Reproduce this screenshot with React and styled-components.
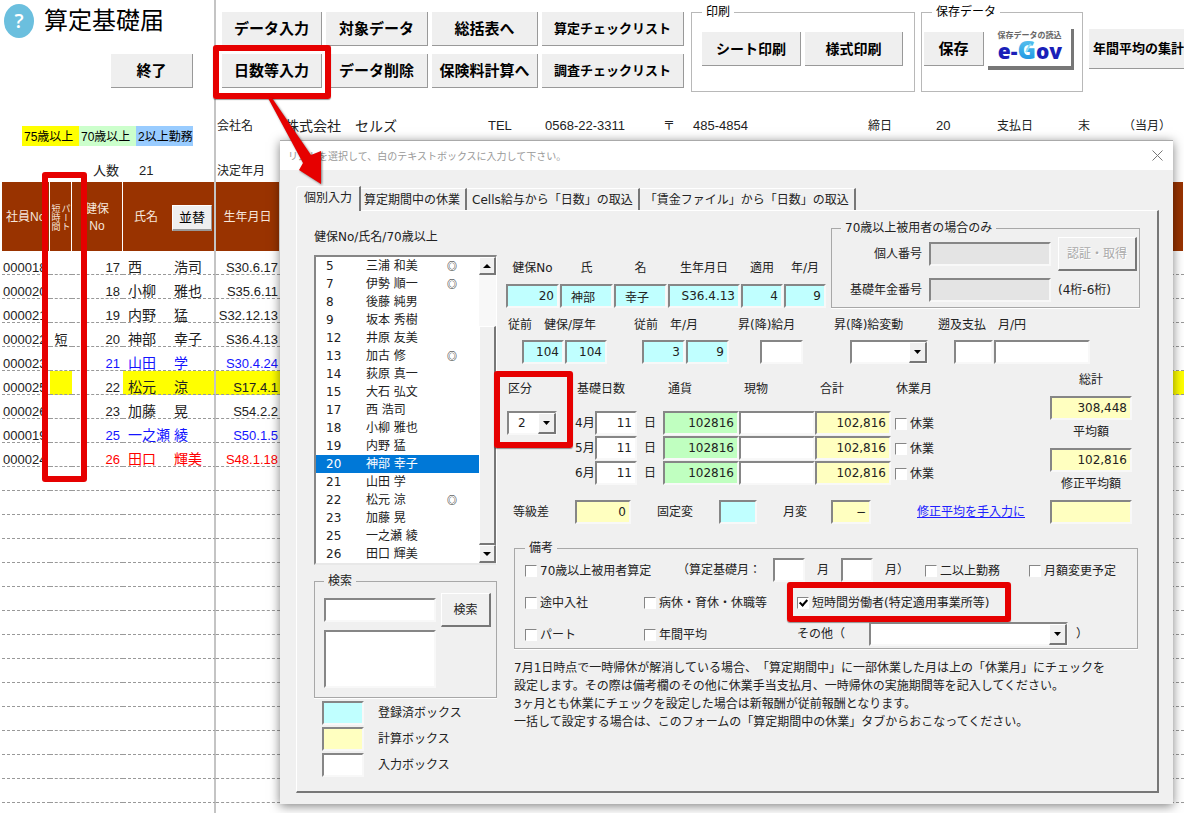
import styled, { createGlobalStyle, css } from "styled-components";

const employees = [
  { code: "000018", no: 17, family: "西", given: "浩司", birth: "S30.6.17" },
  { code: "000020", no: 18, family: "小柳", given: "雅也", birth: "S35.6.11" },
  { code: "000021", no: 19, family: "内野", given: "猛", birth: "S32.12.13" },
  { code: "000022", part: "短", no: 20, family: "神部", given: "幸子", birth: "S36.4.13" },
  { code: "000023", no: 21, family: "山田", given: "学", birth: "S30.4.24", ink: "#1414ff" },
  { code: "000025", no: 22, family: "松元", given: "涼", birth: "S17.4.1", fill: "#ffff00" },
  { code: "000026", no: 23, family: "加藤", given: "晃", birth: "S54.2.2" },
  { code: "000019", no: 25, family: "一之瀬", given: "綾", birth: "S50.1.5", ink: "#1414ff" },
  { code: "000024", no: 26, family: "田口", given: "輝美", birth: "S48.1.18", ink: "#ff0000" },
];

const people = [
  [5, "三浦 和美", true],
  [7, "伊勢 順一", true],
  [8, "後藤 純男"],
  [9, "坂本 秀樹"],
  [12, "井原 友美"],
  [13, "加古 修", true],
  [14, "荻原 真一"],
  [15, "大石 弘文"],
  [17, "西 浩司"],
  [18, "小柳 雅也"],
  [19, "内野 猛"],
  [20, "神部 幸子"],
  [21, "山田 学"],
  [22, "松元 涼", true],
  [23, "加藤 晃"],
  [25, "一之瀬 綾"],
  [26, "田口 輝美"],
];

const blankRows = Array.from({ length: 16 }, (_, i) => i);

const Arrow = () => (
  <ArrowSvg width="60" height="92" viewBox="0 0 60 92" aria-hidden="true">
    <polygon points="3,0 7,0 46,57 56,53 56,86 34,72 38,65" fill="#e60000" />
  </ArrowSvg>
);

const Combo = ({ label, value = "", width }) => (
  <ComboBox $w={width}>
    <select aria-label={label} defaultValue={value}>
      <option value={value}>{value}</option>
    </select>
    <span>
      <svg width="7" height="4" viewBox="0 0 7 4">
        <polygon points="0,0 7,0 3.5,4" fill="#000" />
      </svg>
    </span>
  </ComboBox>
);

const Check = ({ children, ...rest }) => (
  <CheckLabel>
    <input type="checkbox" {...rest} />
    {children}
  </CheckLabel>
);

const SheetTop = () => (
  <Top>
    <TitlePane>
      <Title>
        <Help href="#help">?</Help>
        <h1>算定基礎届</h1>
      </Title>
      <Finish>終了</Finish>
      <Tags>
        <Tag $bg="#ffff00">75歳以上</Tag>
        <Tag $bg="#ccffcc">70歳以上</Tag>
        <Tag $bg="#99ccff">2以上勤務</Tag>
      </Tags>
      <Count>
        <span>人数</span>
        <span>21</span>
      </Count>
    </TitlePane>
    <ToolPane>
      <Tools>
        <ToolGrid>
          <SheetButton>データ入力</SheetButton>
          <SheetButton>対象データ</SheetButton>
          <SheetButton>総括表へ</SheetButton>
          <SheetButton $size={13}>算定チェックリスト</SheetButton>
          <Marked $out="9px 9px 11px 9px">
            <SheetButton>日数等入力</SheetButton>
            <Arrow />
          </Marked>
          <SheetButton>データ削除</SheetButton>
          <SheetButton>保険料計算へ</SheetButton>
          <SheetButton $size={13}>調査チェックリスト</SheetButton>
        </ToolGrid>
        <SheetGroup $w={224} $pad={10}>
          <legend>印刷</legend>
          <div>
            <SheetButton $w={99} $size={14}>シート印刷</SheetButton>
            <SheetButton $w={98} $size={14}>様式印刷</SheetButton>
          </div>
        </SheetGroup>
        <SheetGroup $w={162} $pad={2}>
          <legend>保存データ</legend>
          <div>
            <SheetButton $w={60}>保存</SheetButton>
            <GovButton>
              <small>保存データの読込</small>
              <svg width="72" height="28" viewBox="0 0 72 28">
                <defs>
                  <linearGradient id="g" x1="0" y1="0" x2="0" y2="1">
                    <stop offset="0" stopColor="#6fd0f2" />
                    <stop offset="1" stopColor="#0c8be0" />
                  </linearGradient>
                </defs>
                <text x="36" y="19" fontSize="21" textAnchor="middle">
                  e-
                  <tspan fontSize="25" fill="url(#g)">G</tspan>
                  ov
                </text>
                <path d="M34 9l1-3 2-2M32 12l2-3" fill="none" stroke="#8adcf5" strokeWidth="2" />
              </svg>
            </GovButton>
          </div>
        </SheetGroup>
        <Yearly $w={112} $size={13}>年間平均の集計</Yearly>
      </Tools>
      <Info>
        <span>会社名</span>
        <Company>株式会社　セルズ</Company>
        <b>TEL</b>
        <b>0568-22-3311</b>
        <span>〒</span>
        <b>485-4854</b>
        <span>締日</span>
        <b>20</b>
        <span>支払日</span>
        <span>末</span>
        <span>（当月）</span>
      </Info>
      <Decision>決定年月</Decision>
    </ToolPane>
  </Top>
);

const SheetTable = () => (
  <Table>
    <colgroup>
      <col style={{ width: 48 }} />
      <col style={{ width: 22 }} />
      <col style={{ width: 51 }} />
      <col style={{ width: 93 }} />
      <col style={{ width: 64 }} />
      <col />
    </colgroup>
    <thead>
      <tr>
        <th>社員No</th>
        <PartHead>
          <span>
            パート
            <br />
            短時間
          </span>
        </PartHead>
        <th>
          健保
          <br />
          No
        </th>
        <th>
          <NameHead>
            氏名 <SortButton>並替</SortButton>
          </NameHead>
        </th>
        <th>生年月日</th>
        <th />
      </tr>
    </thead>
    <tbody>
      {employees.map((e) => (
        <Row key={e.code} $ink={e.ink} $fill={e.fill}>
          <td>{e.code}</td>
          <td>{e.part}</td>
          <td>{e.no}</td>
          <td>
            <Name>
              <span>{e.family}</span>
              <span>{e.given}</span>
            </Name>
          </td>
          <td>{e.birth}</td>
          <td />
        </Row>
      ))}
      {blankRows.map((i) => (
        <Row key={i}>
          <td />
          <td />
          <td />
          <td />
          <td />
          <td />
        </Row>
      ))}
    </tbody>
  </Table>
);

const PersonPanel = () => (
  <Side>
    <ListLabel id="people-label">健保No/氏名/70歳以上</ListLabel>
    <ListBox>
      <ul role="listbox" aria-labelledby="people-label">
        {people.map(([no, name, over70]) => (
          <Person key={no} role="option" aria-selected={no === 20}>
            <span>{no}</span>
            <span>{name}</span>
            <span>{over70 && "◎"}</span>
          </Person>
        ))}
      </ul>
      <Scroll>
        <button aria-label="上へ">
          <svg width="8" height="4" viewBox="0 0 8 4">
            <polygon points="0,4 8,4 4,0" />
          </svg>
        </button>
        <Thumb />
        <button aria-label="下へ">
          <svg width="8" height="4" viewBox="0 0 8 4">
            <polygon points="0,0 8,0 4,4" />
          </svg>
        </button>
      </Scroll>
    </ListBox>
    <SearchGroup>
      <legend>検索</legend>
      <div>
        <Field aria-label="検索" $w={112} />
        <FormButton $w={50}>検索</FormButton>
      </div>
      <ResultBox aria-label="検索結果" />
    </SearchGroup>
    <Swatches>
      <li>
        <Swatch $bg="#c0ffff" />
        登録済ボックス
      </li>
      <li>
        <Swatch $bg="#ffffc0" />
        計算ボックス
      </li>
      <li>
        <Swatch $bg="#ffffff" />
        入力ボックス
      </li>
    </Swatches>
  </Side>
);

const Identity = () => (
  <TopLine>
    <IdGrid>
      <label htmlFor="kenpo">健保No</label>
      <label htmlFor="family">氏</label>
      <label htmlFor="given">名</label>
      <label htmlFor="birth">生年月日</label>
      <label htmlFor="applyY">適用</label>
      <label htmlFor="applyM">年/月</label>
      <Field id="kenpo" $bg="#c0ffff" defaultValue="20" />
      <Field id="family" $bg="#c0ffff" $left defaultValue="神部" />
      <Field id="given" $bg="#c0ffff" $left defaultValue="幸子" />
      <Field id="birth" $bg="#c0ffff" defaultValue="S36.4.13" />
      <Field id="applyY" $bg="#c0ffff" defaultValue="4" />
      <Field id="applyM" $bg="#c0ffff" defaultValue="9" />
    </IdGrid>
    <Over70>
      <legend>70歳以上被用者の場合のみ</legend>
      <div>
        <label htmlFor="mynumber">個人番号</label>
        <Field id="mynumber" disabled $bg="#e4e4e4" $w={122} />
        <FormButton disabled $w={79}>認証・取得</FormButton>
      </div>
      <div>
        <label htmlFor="pension">基礎年金番号</label>
        <Field id="pension" disabled $bg="#e4e4e4" $w={122} />
        <span>(4桁-6桁)</span>
      </div>
    </Over70>
  </TopLine>
);

const Previous = () => (
  <PrevLine>
    <Group $w={99}>
      <span>従前　健保/厚年</span>
      <div>
        <Field aria-label="従前 健保" $bg="#c0ffff" $w={42} defaultValue="104" />
        <Field aria-label="従前 厚年" $bg="#c0ffff" $w={42} defaultValue="104" />
      </div>
    </Group>
    <Group $w={95}>
      <span>従前　年/月</span>
      <div>
        <Field aria-label="従前 年" $bg="#c0ffff" $w={43} defaultValue="3" />
        <Field aria-label="従前 月" $bg="#c0ffff" $w={43} defaultValue="9" />
      </div>
    </Group>
    <Group $w={65}>
      <span>昇(降)給月</span>
      <div>
        <Field aria-label="昇(降)給月" $w={43} />
      </div>
    </Group>
    <Group $w={94}>
      <span>昇(降)給変動</span>
      <div>
        <Combo label="昇(降)給変動" width={78} />
      </div>
    </Group>
    <Group $w={152}>
      <span>遡及支払　月/円</span>
      <div>
        <Field aria-label="遡及支払 月" $w={39} />
        <Field aria-label="遡及支払 円" $w={96} />
      </div>
    </Group>
  </PrevLine>
);

const Pay = () => (
  <PayLine>
    <PayMain>
      <PayBody>
        <Kubun $out="10px 6px 13px 13px">
          <span>区分</span>
          <Combo label="区分" value="2" width={50} />
        </Kubun>
        <PayGrid>
          <DaysHead>基礎日数</DaysHead>
          <Head>通貨</Head>
          <Head>現物</Head>
          <Head>合計</Head>
          <Head>休業月</Head>
          {[4, 5, 6].map((m) => (
            <MonthRow key={m}>
              <label htmlFor={`days${m}`}>{m}月</label>
              <Field id={`days${m}`} defaultValue="11" />
              <span>日</span>
              <Field aria-label={`${m}月 通貨`} $bg="#c0ffc0" defaultValue="102816" />
              <Field aria-label={`${m}月 現物`} />
              <Field aria-label={`${m}月 合計`} $bg="#ffffc0" defaultValue="102,816" />
              <RestCell>
                <Check>休業</Check>
              </RestCell>
            </MonthRow>
          ))}
        </PayGrid>
      </PayBody>
      <Diffs>
        <Diff $label={62}>
          等級差
          <Field $bg="#ffffc0" $w={56} defaultValue="0" />
        </Diff>
        <Diff $label={62}>
          固定変
          <Field $bg="#c0ffff" $w={38} />
        </Diff>
        <Diff $label={48}>
          月変
          <Field $bg="#ffffc0" $w={40} defaultValue="−" />
        </Diff>
        <a href="#manual">修正平均を手入力に</a>
      </Diffs>
    </PayMain>
    <Totals>
      <label htmlFor="total">総計</label>
      <Field id="total" $bg="#ffffc0" $w={82} defaultValue="308,448" />
      <label htmlFor="average">平均額</label>
      <Field id="average" $bg="#ffffc0" $w={82} defaultValue="102,816" />
      <label htmlFor="fixed">修正平均額</label>
      <Field id="fixed" $bg="#ffffc0" $w={82} />
    </Totals>
  </PayLine>
);

const Remarks = () => (
  <RemarkGroup>
    <legend>備考</legend>
    <RemarkTop>
      <Check>70歳以上被用者算定</Check>
      <BaseMonths>
        <span>（算定基礎月：</span>
        <Field aria-label="算定基礎月 1" $w={32} />
        <span>月</span>
        <Field aria-label="算定基礎月 2" $w={32} />
        <span>月）</span>
      </BaseMonths>
      <Check>二以上勤務</Check>
      <Check>月額変更予定</Check>
    </RemarkTop>
    <RemarkLine>
      <Check>途中入社</Check>
      <Check>病休・育休・休職等</Check>
      <Short $out="11px 22px 11px 10px">
        <Check defaultChecked>短時間労働者(特定適用事業所等)</Check>
      </Short>
    </RemarkLine>
    <RemarkLine>
      <Check>パート</Check>
      <Check>年間平均</Check>
      <Other>
        <span>その他（</span>
        <Combo label="その他" width={199} />
        <span>）</span>
      </Other>
    </RemarkLine>
  </RemarkGroup>
);

const App = () => (
  <>
    <GlobalStyle />
    <Sheet>
      <SheetTop />
      <SheetTable />
      <Dialog role="dialog" aria-label="個別入力">
        <TitleBar>
          リストを選択して、白のテキストボックスに入力して下さい。
          <button aria-label="閉じる">
            <svg width="11" height="11" viewBox="0 0 11 11">
              <path d="M.5.5l10 10M10.5.5l-10 10" stroke="#777" fill="none" />
            </svg>
          </button>
        </TitleBar>
        <DialogBody>
          <Tabs role="tablist">
            <Tab role="tab" aria-selected="true">個別入力</Tab>
            <Tab role="tab" aria-selected="false">算定期間中の休業</Tab>
            <Tab role="tab" aria-selected="false">Cells給与から「日数」の取込</Tab>
            <Tab role="tab" aria-selected="false">「賃金ファイル」から「日数」の取込</Tab>
          </Tabs>
          <Panel role="tabpanel">
            <PersonPanel />
            <Main>
              <Identity />
              <Previous />
              <Pay />
              <Remarks />
              <Note>
                7月1日時点で一時帰休が解消している場合、「算定期間中」に一部休業した月は上の「休業月」にチェックを
                <br />
                設定します。その際は備考欄のその他に休業手当支払月、一時帰休の実施期間等を記入してください。
                <br />
                3ヶ月とも休業にチェックを設定した場合は新報酬が従前報酬となります。
                <br />
                一括して設定する場合は、このフォームの「算定期間中の休業」タブからおこなってください。
              </Note>
            </Main>
          </Panel>
        </DialogBody>
      </Dialog>
    </Sheet>
  </>
);

const GlobalStyle = createGlobalStyle`
  *, *::before, *::after {
    box-sizing: border-box;
  }
  body {
    margin: 0;
    background: #fff;
    color: #000;
    overflow: hidden;
    font: 12px/16px "Liberation Sans", "Noto Sans CJK JP", sans-serif;
    text-spacing-trim: space-all;
  }
  button, input, select, textarea {
    font: inherit;
    color: inherit;
    margin: 0;
    border-radius: 0;
  }
  h1, ul, p, fieldset {
    margin: 0;
    padding: 0;
  }
  ul {
    list-style: none;
  }
`;

/* red frame round whatever it wraps; $out is top right bottom left */
const Marked = styled.div`
  position: relative;
  display: flex;
  &::after {
    content: "";
    position: absolute;
    inset: ${({ $out }) => $out.split(" ").map((v) => `-${v}`).join(" ")};
    border: 6px solid #e60000;
    border-radius: 3px;
    pointer-events: none;
    box-shadow: 0 1px 1px rgba(0, 0, 0, 0.4);
  }
`;

const ArrowSvg = styled.svg`
  position: absolute;
  left: 43px;
  top: 44px;
  z-index: 5;
  pointer-events: none;
  filter: drop-shadow(1px 1px 1px rgba(0, 0, 0, 0.5));
`;

const Sheet = styled.main`
  position: relative;
  height: 100vh;
  overflow: hidden;
`;

const Top = styled.header`
  display: flex;
`;

const TitlePane = styled.div`
  flex: none;
  width: 216px;
  height: 182px;
  border-right: 2px solid #c4c4c4;
`;

const Title = styled.div`
  display: flex;
  align-items: center;
  height: 42px;
  padding-left: 4px;
  gap: 10px;
  h1 {
    font-size: 24px;
    font-weight: 400;
    line-height: 32px;
  }
`;

const Help = styled.a`
  display: grid;
  place-items: center;
  width: 30px;
  height: 34px;
  border-radius: 50%;
  background: #6bbfde;
  color: #fff;
  font-family: "Open Sans", sans-serif;
  font-size: 20px;
  font-weight: 600;
  text-decoration: none;
`;

const SheetButton = styled.button`
  width: ${({ $w }) => ($w ? `${$w}px` : "100%")};
  height: 34px;
  flex: none;
  padding: 0;
  border: 0;
  border-right: 1px solid #999;
  border-bottom: 1px solid #999;
  background: #efefef;
  font-size: ${({ $size = 15 }) => $size}px;
  font-weight: 700;
  white-space: nowrap;
`;

const Finish = styled(SheetButton)`
  display: block;
  width: 82px;
  margin: 12px 0 38px 111px;
`;

const Tags = styled.div`
  display: flex;
  margin-left: 22px;
`;

const Tag = styled.span`
  width: 57px;
  height: 20px;
  padding-left: 2px;
  line-height: 22px;
  white-space: nowrap;
  background: ${({ $bg }) => $bg};
`;

const Count = styled.div`
  display: flex;
  gap: 20px;
  margin: 15px 0 0 93px;
  line-height: 20px;
  font-size: 13px;
  color: #222;
`;

const ToolPane = styled.div`
  flex: 1;
  min-width: 0;
`;

const Tools = styled.div`
  display: flex;
  height: 92px;
  padding: 4px 0 0 6px;
`;

const ToolGrid = styled.div`
  display: grid;
  flex: none;
  grid-template-columns: 100px 102px 106px 142px;
  grid-auto-rows: 34px;
  gap: 8px 4px;
  padding: 8px 1px 0 0;
`;

const SheetGroup = styled.fieldset`
  flex: none;
  width: ${({ $w }) => $w}px;
  margin-left: 6px;
  border: 1px solid #b8b8b8;
  legend {
    margin-left: 10px;
    padding: 0 4px;
  }
  > div {
    display: flex;
    align-items: center;
    gap: 4px;
    height: 40px;
    margin-top: 9px;
    padding-left: ${({ $pad }) => $pad}px;
  }
`;

const GovButton = styled.button`
  display: flex;
  flex-direction: column;
  align-items: center;
  width: 86px;
  height: 41px;
  padding: 2px 0 0;
  border: 0;
  border-right: 3px solid #777;
  border-bottom: 4px solid #777;
  background: #fff;
  small {
    font-size: 8px;
    line-height: 9px;
    font-weight: 700;
    color: #666;
    white-space: nowrap;
  }
  svg {
    display: block;
    flex: none;
    overflow: visible;
    font-family: "Open Sans", sans-serif;
    font-weight: 800;
    fill: #1a1fb8;
  }
`;

const Yearly = styled(SheetButton)`
  height: 40px;
  margin: 25px 0 0 6px;
  padding-left: 4px;
  text-align: left;
`;

const Info = styled.div`
  display: grid;
  grid-template-columns: 68px 203px 57px 118px 30px 175px 68px 61px 81px 45px 60px;
  height: 20px;
  margin: 24px 0 25px 1px;
  color: #222;
  line-height: 20px;
  white-space: nowrap;
  b {
    font-weight: 400;
    font-size: 13px;
  }
`;

const Company = styled.span`
  font-size: 14px;
`;

const Decision = styled.div`
  padding-left: 1px;
  color: #222;
  line-height: 20px;
`;

const Table = styled.table`
  width: calc(100% - 2px);
  margin-left: 2px;
  table-layout: fixed;
  border-collapse: separate;
  border-spacing: 0;
  th {
    height: 69px;
    padding: 2px 0 0;
    background: #993300;
    color: #f6e6dc;
    font-weight: 400;
    line-height: 17px;
    white-space: nowrap;
    border-right: 1px solid #fff;
  }
  th:first-child {
    text-align: left;
    padding-left: 4px;
    overflow: hidden;
  }
  th:nth-child(4),
  td:nth-child(4) {
    border-right: 2px solid #c4c4c4;
  }
`;

const PartHead = styled.th`
  position: relative;
  span {
    display: inline-block;
    writing-mode: vertical-rl;
    font-size: 9px;
    line-height: 10px;
    vertical-align: middle;
  }
  &::after {
    content: "";
    position: absolute;
    top: -10px;
    left: -8px;
    width: 45px;
    height: 310px;
    border: 6px solid #e60000;
    border-radius: 3px;
    pointer-events: none;
  }
`;

const NameHead = styled.div`
  display: flex;
  align-items: center;
  justify-content: space-between;
  padding: 0 2px 0 11px;
`;

const SortButton = styled.button`
  width: 40px;
  height: 26px;
  padding: 0;
  border: 1px solid #fff;
  border-right-color: #999;
  border-bottom: 2px solid #999;
  background: #efefef;
  color: #000;
  font-size: 13px;
`;

const Row = styled.tr`
  td {
    height: 24px;
    padding: 0;
    vertical-align: bottom;
    border-bottom: 1px dashed #999;
    font-size: 13px;
    line-height: 13px;
    color: ${({ $ink }) => $ink || "#222"};
    white-space: nowrap;
  }
  td:first-child {
    padding-left: 1px;
    color: #222;
  }
  td:nth-child(2) {
    text-align: center;
  }
  td:nth-child(3) {
    text-align: right;
    padding-right: 3px;
  }
  td:nth-child(5) {
    text-align: right;
    padding-right: 2px;
  }
  ${({ $fill }) =>
    $fill &&
    css`
      td:nth-child(2),
      td:nth-child(n + 4) {
        background: ${$fill};
      }
    `}
`;

const Name = styled.div`
  display: grid;
  grid-template-columns: 46px 1fr;
  padding-left: 5px;
  font-size: 14px;
`;

const Dialog = styled.section`
  position: absolute;
  top: 140px;
  left: 280px;
  right: 11px;
  border-top: 1px solid #aaa;
  background: #f0f0f0;
  color: #222;
  box-shadow: 0 2px 10px rgba(0, 0, 0, 0.5);
  font-family: "DejaVu Sans", "Noto Sans CJK JP", sans-serif;
  font-size: 12px;
  line-height: 16px;
`;

const TitleBar = styled.div`
  display: flex;
  justify-content: space-between;
  align-items: center;
  height: 29px;
  padding: 0 8px;
  background: #fff;
  color: #999;
  font-family: "Noto Sans CJK JP", sans-serif;
  font-size: 10px;
  button {
    display: grid;
    place-items: center;
    width: 16px;
    height: 16px;
    padding: 0;
    border: 0;
    background: none;
  }
`;

const DialogBody = styled.div`
  padding: 16px 14px 11px 16px;
`;

const Tabs = styled.div`
  display: flex;
  align-items: flex-end;
`;

const Tab = styled.button`
  height: 22px;
  padding: 0 5px;
  border: 0;
  border-top: 1px solid #fff;
  border-right: 2px solid #777;
  background: #f0f0f0;
  white-space: nowrap;
  &[aria-selected="true"] {
    height: 25px;
    margin-bottom: -1px;
    padding: 0 7px 3px;
    border-left: 1px solid #fff;
    border-radius: 3px 0 0 0;
  }
  &:nth-child(2) {
    padding: 0 5px 0 3px;
  }
`;

const Panel = styled.div`
  display: flex;
  gap: 9px;
  padding: 9px 17px 14px;
  border: 1px solid #fff;
  border-right: 2px solid #777;
  border-bottom: 2px solid #777;
`;

const Side = styled.div`
  flex: none;
  width: 183px;
`;

const ListLabel = styled.div`
  margin: 9px 0 10px;
`;

const ListBox = styled.div`
  display: flex;
  border: 2px solid #868686;
  border-right: 1px solid #fff;
  border-bottom: 2px solid #e8e8e8;
  background: #fff;
  ul {
    flex: 1;
  }
`;

const Person = styled.li`
  display: grid;
  grid-template-columns: 40px 81px 1fr;
  height: 18px;
  padding-left: 10px;
  line-height: 18px;
  &[aria-selected="true"] {
    background: #0078d7;
    color: #fff;
  }
  span:last-child {
    font-size: 10px;
    font-family: "Noto Sans CJK JP", sans-serif;
    font-weight: 700;
  }
`;

const raised = css`
  border: 1px solid #fff;
  border-right: 2px solid #777;
  border-bottom: 2px solid #777;
  background: #f0f0f0;
`;

const Scroll = styled.div`
  display: flex;
  flex-direction: column;
  width: 17px;
  background: #f8f8f8;
  button {
    display: grid;
    place-items: center;
    height: 18px;
    padding: 0;
    ${raised}
  }
`;

const Thumb = styled.div`
  height: 219px;
  margin-top: auto;
  ${raised}
`;

const FormGroup = styled.fieldset`
  border: 1px solid #a8a8a8;
  box-shadow: 0 1px 0 #fff;
  min-width: 0;
  legend {
    padding: 0 4px;
  }
`;

const SearchGroup = styled(FormGroup)`
  margin-top: 8px;
  padding: 4px 5px 9px 9px;
  > div {
    display: flex;
    align-items: center;
    justify-content: space-between;
    margin-bottom: 3px;
  }
`;

const sunken = css`
  border: 2px solid #868686;
  border-right: 2px solid #f8f8f8;
  border-bottom: 2px solid #f8f8f8;
  background: ${({ $bg = "#fff" }) => $bg};
`;

const Field = styled.input`
  width: ${({ $w }) => ($w ? `${$w}px` : "100%")};
  min-width: 0;
  height: 24px;
  padding: ${({ $left }) => ($left ? "0 0 0 9px" : "0 3px")};
  text-align: ${({ $left }) => ($left ? "left" : "right")};
  ${sunken}
`;

const ResultBox = styled.textarea`
  display: block;
  width: 112px;
  height: 58px;
  resize: none;
  ${sunken}
`;

const FormButton = styled.button`
  width: ${({ $w }) => $w}px;
  height: 34px;
  padding: 0;
  white-space: nowrap;
  ${raised}
  &:disabled {
    color: #aaa;
    text-shadow: 1px 1px 0 #fff;
  }
`;

const Swatches = styled.ul`
  display: grid;
  gap: 2px;
  margin-top: 3px;
  padding-left: 8px;
  li {
    display: flex;
    align-items: center;
    gap: 14px;
    line-height: 20px;
  }
`;

const Swatch = styled.i`
  width: 42px;
  height: 24px;
  ${sunken}
`;

const Main = styled.div`
  flex: 1;
  min-width: 0;
`;

const TopLine = styled.div`
  display: flex;
  align-items: flex-end;
  gap: 5px;
`;

const IdGrid = styled.div`
  display: grid;
  grid-template-columns: 53px 53px 53px 72px 42px 42px;
  gap: 8px 1px;
  text-align: center;
  white-space: nowrap;
`;

const Over70 = styled(FormGroup)`
  width: 311px;
  padding: 1px 0 5px;
  legend {
    margin-left: 9px;
  }
  > div {
    display: grid;
    grid-template-columns: 90px 122px 79px;
    gap: 7px;
    align-items: center;
  }
  > div:last-child {
    margin-top: 7px;
  }
  label {
    text-align: right;
  }
`;

const PrevLine = styled.div`
  display: grid;
  grid-template-columns: 126px 104px 96px 104px 1fr;
  margin: 9px 0 0 2px;
`;

const Group = styled.div`
  width: ${({ $w }) => $w}px;
  white-space: nowrap;
  > div {
    display: flex;
    justify-content: flex-end;
    gap: 1px;
    margin-top: 7px;
  }
`;

const ComboBox = styled.div`
  position: relative;
  flex: none;
  width: ${({ $w }) => $w}px;
  height: 24px;
  select {
    width: 100%;
    height: 100%;
    padding: 0 9px;
    appearance: none;
    ${sunken}
  }
  span {
    position: absolute;
    top: 2px;
    right: 1px;
    bottom: 1px;
    width: 18px;
    display: grid;
    place-items: center;
    pointer-events: none;
    ${raised}
  }
`;

const PayLine = styled.div`
  display: flex;
  justify-content: space-between;
  margin-top: 8px;
  padding-right: 8px;
`;

const PayMain = styled.div`
  padding-top: 9px;
`;

const PayBody = styled.div`
  display: flex;
`;

const Kubun = styled(Marked)`
  flex-direction: column;
  align-self: flex-start;
  gap: 14px;
  width: 60px;
  margin: 0 8px 0 1px;
  > span {
    padding-left: 1px;
  }
`;

const PayGrid = styled.div`
  display: grid;
  grid-template-columns: 20px 42px 26px 76px 76px 76px 60px;
  row-gap: 1px;
  align-items: center;
`;

const Head = styled.div`
  margin-bottom: 13px;
  padding-left: 5px;
`;

const DaysHead = styled(Head)`
  grid-column: span 3;
  padding-left: 2px;
`;

const MonthRow = styled.div`
  display: contents;
  > span {
    text-align: center;
  }
`;

const RestCell = styled.div`
  padding: 2px 0 0 4px;
`;

const CheckLabel = styled.label`
  display: inline-flex;
  align-items: center;
  gap: 3px;
  padding-top: 2px;
  white-space: nowrap;
  input {
    position: relative;
    width: 12px;
    height: 12px;
    appearance: none;
    border: 1px solid #868686;
    border-right-color: #fff;
    border-bottom-color: #fff;
    background: #fff;
  }
  input:checked::after {
    content: "";
    position: absolute;
    left: 3px;
    top: 0;
    width: 5px;
    height: 8px;
    border: solid #000;
    border-width: 0 2px 2px 0;
    transform: rotate(42deg);
  }
`;

const Diffs = styled.div`
  display: flex;
  align-items: center;
  gap: 26px;
  margin: 15px 0 0 7px;
  a {
    margin-left: 20px;
    color: #2020ff;
  }
`;

const Diff = styled.label`
  display: grid;
  grid-template-columns: ${({ $label }) => $label}px auto;
  align-items: center;
`;

const Totals = styled.div`
  display: flex;
  flex-direction: column;
  align-items: center;
  label {
    margin-bottom: 8px;
  }
  input + label {
    margin-top: 4px;
  }
`;

const RemarkGroup = styled(FormGroup)`
  margin: 16px 2px 0 8px;
  padding: 2px 10px;
`;

const RemarkTop = styled.div`
  display: grid;
  grid-template-columns: 152px 248px 104px 1fr;
  align-items: center;
  height: 24px;
`;

const BaseMonths = styled.div`
  display: flex;
  align-items: center;
  gap: 12px;
  span {
    white-space: nowrap;
  }
`;

const RemarkLine = styled.div`
  display: grid;
  grid-template-columns: 119px 153px 1fr;
  align-items: center;
  height: 24px;
  margin-top: 8px;
`;

const Short = styled(Marked)`
  justify-self: start;
`;

const Other = styled.div`
  display: flex;
  align-items: center;
  gap: 8px;
  span:first-child {
    width: 64px;
  }
`;

const Note = styled.p`
  margin: 10px 0 0 8px;
  line-height: 18px;
  white-space: nowrap;
`;

export default App;
